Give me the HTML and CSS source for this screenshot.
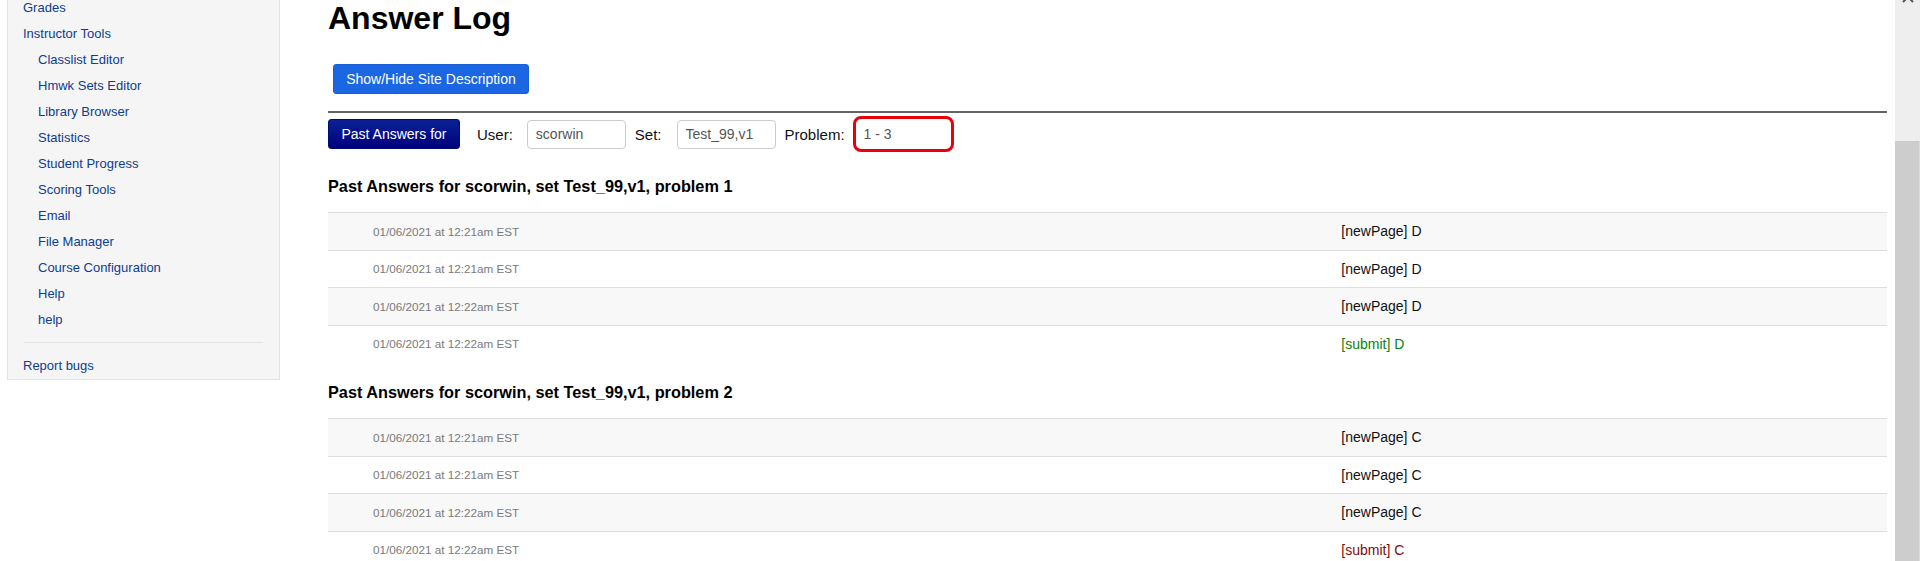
FILE: index.html
```html
<!DOCTYPE html>
<html lang="en">
<head>
    <meta charset="UTF-8">
    <title>Answer Log</title>
    <link rel="stylesheet" href="styles.css">
</head>
<body>
    <div class="page">
        <!-- Left navigation -->
        <nav class="sidebar">
            <ul class="nav-list">
                <li><a href="#">Grades</a></li>
                <li><a href="#">Instructor Tools</a>
                    <ul class="nav-sub">
                        <li><a href="#">Classlist Editor</a></li>
                        <li><a href="#">Hmwk Sets Editor</a></li>
                        <li><a href="#">Library Browser</a></li>
                        <li><a href="#">Statistics</a></li>
                        <li><a href="#">Student Progress</a></li>
                        <li><a href="#">Scoring Tools</a></li>
                        <li><a href="#">Email</a></li>
                        <li><a href="#">File Manager</a></li>
                        <li><a href="#">Course Configuration</a></li>
                        <li><a href="#">Help</a></li>
                        <li><a href="#">help</a></li>
                    </ul>
                </li>
            </ul>
            <hr class="nav-divider">
            <ul class="nav-list">
                <li><a href="#">Report bugs</a></li>
            </ul>
        </nav>

        <!-- Main content -->
        <main class="content">
            <h1 class="page-title">Answer Log</h1>
            <button class="btn btn-info">Show/Hide Site Description</button>
            <hr class="rule">

            <form class="answer-form">
                <button type="button" class="btn btn-navy">Past Answers for</button>
                <label class="field-label label-user">User:</label>
                <input class="field-input input-user" type="text" value="scorwin">
                <label class="field-label">Set:</label>
                <input class="field-input input-set" type="text" value="Test_99,v1">
                <label class="field-label">Problem:</label>
                <input class="field-input input-problem" type="text" value="1 - 3">
            </form>

            <section class="past-answers">
                <h2>Past Answers for scorwin, set Test_99,v1, problem 1</h2>
                <div class="answer-table">
                    <div class="answer-row">
                        <span class="answer-time">01/06/2021 at 12:21am EST</span>
                        <span class="answer-text">[newPage] D</span>
                    </div>
                    <div class="answer-row">
                        <span class="answer-time">01/06/2021 at 12:21am EST</span>
                        <span class="answer-text">[newPage] D</span>
                    </div>
                    <div class="answer-row">
                        <span class="answer-time">01/06/2021 at 12:22am EST</span>
                        <span class="answer-text">[newPage] D</span>
                    </div>
                    <div class="answer-row">
                        <span class="answer-time">01/06/2021 at 12:22am EST</span>
                        <span class="answer-text correct">[submit] D</span>
                    </div>
                </div>
            </section>

            <section class="past-answers">
                <h2>Past Answers for scorwin, set Test_99,v1, problem 2</h2>
                <div class="answer-table">
                    <div class="answer-row">
                        <span class="answer-time">01/06/2021 at 12:21am EST</span>
                        <span class="answer-text">[newPage] C</span>
                    </div>
                    <div class="answer-row">
                        <span class="answer-time">01/06/2021 at 12:21am EST</span>
                        <span class="answer-text">[newPage] C</span>
                    </div>
                    <div class="answer-row">
                        <span class="answer-time">01/06/2021 at 12:22am EST</span>
                        <span class="answer-text">[newPage] C</span>
                    </div>
                    <div class="answer-row">
                        <span class="answer-time">01/06/2021 at 12:22am EST</span>
                        <span class="answer-text incorrect">[submit] C</span>
                    </div>
                </div>
            </section>
        </main>

        <!-- Right scroll strip -->
        <div class="scroll-strip">
            <svg class="close-mark" width="12" height="12" viewBox="0 0 12 12">
                <path d="M1 1 L11 11 M11 1 L1 11" stroke="#555" stroke-width="2" fill="none"/>
            </svg>
            <div class="scroll-thumb"></div>
        </div>
    </div>
</body>
</html>
```

FILE: styles.css
```css
* {
    box-sizing: border-box;
}

html, body {
    height: 561px;
    overflow: hidden;
}

body {
    margin: 0;
    background: #fff;
    color: #000;
    font-family: "Liberation Sans", Arial, sans-serif;
}

.page {
    display: flex;
    align-items: flex-start;
    height: 100%;
}

/* Sidebar */
.sidebar {
    width: 273px;
    margin-left: 7px;
    margin-top: -5px;
    background: #f5f5f5;
    border: 1px solid #e3e3e3;
    border-top: none;
    flex-shrink: 0;
}

.nav-list {
    list-style: none;
    margin: 0;
    padding: 0;
}

.nav-list li {
    font-size: 13px;
    line-height: 26px;
}

.nav-list a {
    display: block;
    padding-left: 15px;
    color: #0c3d90;
    text-decoration: none;
}

.nav-sub {
    list-style: none;
    margin: 0;
    padding: 0 0 0 15px;
}

.nav-divider {
    margin: 9px 16px 10px;
    border: none;
    border-top: 1px solid #e2e2e2;
}

/* Main */
.content {
    flex: 1;
    margin-left: 48px;
    margin-right: 8px;
}

.page-title {
    margin: 0;
    font-size: 32px;
    line-height: 37px;
    font-weight: bold;
}

.btn {
    height: 30px;
    border-radius: 3px;
    font-family: "Liberation Sans", Arial, sans-serif;
    font-size: 14px;
    color: #fff;
    cursor: pointer;
}

.btn-info {
    display: block;
    width: 196px;
    margin: 27px 0 0 5px;
    padding: 0;
    background: #1b67e3;
    border: 1px solid #1760d6;
}

.rule {
    margin: 17px 0 0;
    border: none;
    border-top: 2px solid #636363;
}

.answer-form {
    display: flex;
    align-items: center;
    height: 36px;
    margin: 3px 0 24px;
}

.btn-navy {
    width: 132px;
    padding: 0;
    background: linear-gradient(#0a2294, #00007e);
    border: 1px solid #000c6e;
}

.field-label {
    margin-left: 9px;
    font-size: 15px;
    color: #111;
}

.label-user {
    margin-left: 17px;
}

.field-input {
    width: 99px;
    height: 29px;
    padding: 0 6px 0 8px;
    border: 1px solid #ccc;
    border-radius: 4px;
    font-family: "Liberation Sans", Arial, sans-serif;
    font-size: 14px;
    color: #555;
}

.input-user {
    margin-left: 14px;
}

.input-set {
    margin-left: 15px;
}

.input-problem {
    width: 101px;
    height: 36px;
    margin-left: 8px;
    padding: 0 4px 0 8px;
    border: 3px solid #e8000b;
    border-radius: 8px;
}

/* Past answer tables */
.past-answers {
    margin-top: 20px;
}

.past-answers h2 {
    margin: 0 0 16px;
    font-size: 16.3px;
    line-height: 20px;
    font-weight: bold;
}

.answer-row {
    display: grid;
    grid-template-columns: 65% 1fr;
    align-items: center;
    height: 37.5px;
    border-top: 1px solid #dedede;
}

.answer-row:nth-child(odd) {
    background: #f8f8f8;
}

.answer-time {
    padding-left: 45px;
    font-size: 11.7px;
    color: #7a7a7a;
}

.answer-text {
    font-size: 14px;
    color: #111;
}

.answer-text.correct {
    color: #0a820a;
}

.answer-text.incorrect {
    color: #7d0b0b;
}

/* Right strip */
.scroll-strip {
    width: 25px;
    height: 100%;
    background: #eee;
    display: flex;
    flex-direction: column;
    flex-shrink: 0;
    overflow: hidden;
}

.close-mark {
    margin: -9px 0 0 7px;
}

.scroll-thumb {
    margin-top: 138px;
    flex: 1;
    background: #cdcdcd;
    border-right: 1px solid #dadada;
}
```
